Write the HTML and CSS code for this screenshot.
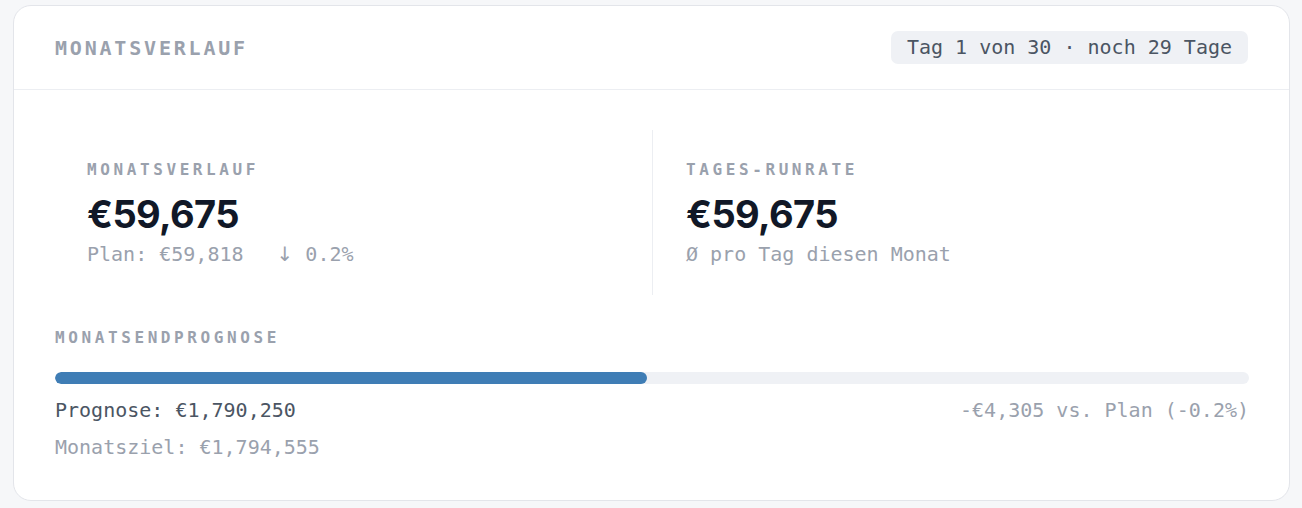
FILE: index.html
```html
<!DOCTYPE html>
<html lang="de">
<head>
<meta charset="utf-8">
<title>Monatsverlauf</title>
<link rel="stylesheet" href="styles.css">
</head>
<body>
<section class="card">
  <header class="card-head">
    <h2 class="card-title">MONATSVERLAUF</h2>
    <span class="badge">Tag 1 von 30 · noch 29 Tage</span>
  </header>
  <div class="card-body">
    <div class="stats">
      <div class="stat">
        <div class="label">MONATSVERLAUF</div>
        <div class="big">€59,675</div>
        <div class="sub">Plan: €59,818<span class="delta"><span class="arrow">↓</span> 0.2%</span></div>
      </div>
      <div class="stat stat-right">
        <div class="label">TAGES-RUNRATE</div>
        <div class="big">€59,675</div>
        <div class="sub">Ø pro Tag diesen Monat</div>
      </div>
    </div>
    <div class="forecast">
      <div class="label">MONATSENDPROGNOSE</div>
      <div class="track"><div class="fill" style="width: 49.6%"></div></div>
      <div class="row">
        <span class="prog">Prognose: €1,790,250</span>
        <span class="diff">-€4,305 vs. Plan (-0.2%)</span>
      </div>
      <div class="goal">Monatsziel: €1,794,555</div>
    </div>
  </div>
</section>
</body>
</html>
```

FILE: styles.css
```css
* { box-sizing: border-box; }
html, body { margin: 0; padding: 0; }
body {
  background: #f6f7f9;
  padding: 5px 12px 0 13px;
  font-family: "DejaVu Sans Mono", "Liberation Mono", monospace;
  color: #4b5563;
}
.card {
  background: #ffffff;
  border: 1px solid #e3e5ea;
  border-radius: 18px;
  height: 496px;
}
.card-head {
  display: flex;
  align-items: center;
  justify-content: space-between;
  height: 84px;
  padding: 0 40px 0 41px;
  border-bottom: 1px solid #eceef2;
}
.card-title {
  margin: 0;
  font-size: 20px;
  font-weight: 700;
  letter-spacing: 2.8px;
  color: #9aa1ad;
}
.badge {
  background: #eff1f5;
  border-radius: 7px;
  padding: 0 16px;
  height: 33px;
  display: flex;
  align-items: center;
  font-size: 20px;
  color: #4b5563;
  margin-top: -1px;
  margin-right: 1px;
}
.card-body {
  padding: 40px 40px 0 41px;
}
.stats {
  display: grid;
  grid-template-columns: 597px 1fr;
  height: 165px;
}
.stat {
  padding: 30px 32px 0 32px;
}
.stat-right {
  border-left: 1px solid #eceef2;
  padding-left: 33px;
}
.label {
  font-size: 16px;
  line-height: 20px;
  font-weight: 700;
  letter-spacing: 3.6px;
  color: #9aa1ad;
}
.big {
  font-family: Inter, "Liberation Sans", sans-serif;
  font-weight: 700;
  font-size: 38px;
  line-height: 46px;
  letter-spacing: -0.6px;
  color: #111827;
  margin-top: 11px;
}
.sub {
  font-size: 20px;
  line-height: 28px;
  color: #9aa1ad;
  margin-top: 3px;
}
.delta {
  margin-left: 33px;
}
.arrow {
  font-family: "DejaVu Sans", sans-serif;
  font-size: 20px;
}
.forecast {
  padding-top: 33px;
}
.track {
  margin-top: 24px;
  height: 12px;
  border-radius: 6px;
  background: #eff1f5;
  overflow: hidden;
}
.fill {
  height: 100%;
  background: #3f7db5;
  border-radius: 6px;
}
.row {
  display: flex;
  justify-content: space-between;
  margin-top: 12px;
  font-size: 20px;
  line-height: 28px;
}
.prog {
  color: #4b5563;
  font-weight: 500;
}
.diff {
  color: #9aa1ad;
}
.goal {
  margin-top: 9px;
  font-size: 20px;
  line-height: 28px;
  color: #9aa1ad;
}
```
